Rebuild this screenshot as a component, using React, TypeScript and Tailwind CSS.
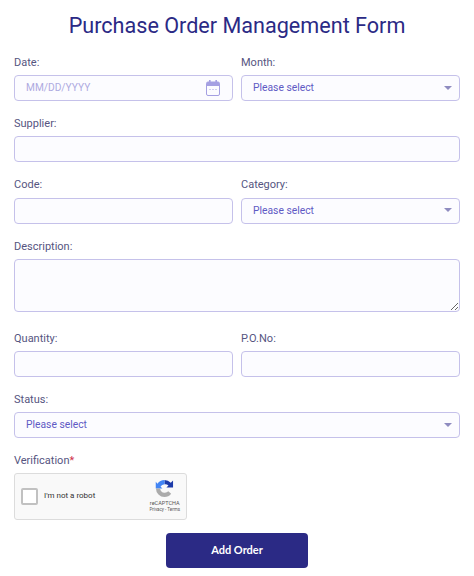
import React from "react";

const inputClass =
  "w-full h-[26px] rounded-[4px] border border-[#c5c1ea] bg-[#fcfcff] outline-none";

const Label = ({ children }: { children: React.ReactNode }) => (
  <label className="block h-[20px] pt-[0.5px] text-[11px] leading-[14px] text-[#56557f]">
    {children}
  </label>
);

const TextField = ({ label }: { label: string }) => (
  <div className="min-w-0">
    <Label>{label}</Label>
    <input className={inputClass} />
  </div>
);

const SelectField = ({ label }: { label: string }) => (
  <div className="min-w-0">
    <Label>{label}</Label>
    <div className={`${inputClass} flex items-center justify-between pb-[1px] pl-[11px] pr-[7px]`}>
      <span className="text-[10.3px] text-[#5f5ac4]">Please select</span>
      <svg width="8" height="4" viewBox="0 0 8 4">
        <path d="M0 0h8L4 4z" fill="#8f8cc0" />
      </svg>
    </div>
  </div>
);

const CalendarIcon = () => (
  <svg width="14" height="16" viewBox="0 0 14 16" fill="none">
    <rect x="0.5" y="2" width="13" height="13.5" rx="1.5" fill="#fcfcff" stroke="#a5a0e2" />
    <path d="M0.5 3.5a1.5 1.5 0 0 1 1.5-1.5h10a1.5 1.5 0 0 1 1.5 1.5V6h-13z" fill="#a5a0e2" />
    <rect x="3" y="0" width="1.6" height="3" fill="#a5a0e2" />
    <rect x="9.4" y="0" width="1.6" height="3" fill="#a5a0e2" />
    <path d="M3.5 9.5h1M6.5 9.5h1M9.5 9.5h1" stroke="#a5a0e2" />
  </svg>
);

const RecaptchaLogo = () => (
  <svg width="19" height="19" viewBox="0 0 20 20" fill="none">
    <path d="M10 1a9 9 0 0 1 6.6 2.9L19 1.5V9h-7l2.2-2.2A5 5 0 0 0 10 5.5z" fill="#1c3aa9" />
    <path d="M10 1a9 9 0 0 0-7.4 3.9L0.8 3v7h7L5.8 8A5 5 0 0 1 10 5.5z" fill="#4285f4" />
    <path d="M1 10a9 9 0 0 0 9 9 9 9 0 0 0 7-3.4l-3-2.6A5 5 0 0 1 10 14.5 5 5 0 0 1 5.4 10z" fill="#ababab" />
  </svg>
);

export default function App() {
  return (
    <div className="w-[474px] h-[576px] overflow-hidden bg-white px-[14px] font-['Roboto',sans-serif]">
      <h1 className="h-[55px] pt-[11px] text-center text-[21.6px] leading-[30px] text-[#2b2a85]">
        Purchase Order Management Form
      </h1>

      <div className="grid grid-cols-2 gap-x-[8px] gap-y-[15.4px]">
        <div className="min-w-0">
          <Label>Date:</Label>
          <div className={`${inputClass} flex items-center justify-between pb-[1px] pl-[11px] pr-[12px]`}>
            <span className="text-[10.2px] text-[#aeaadf]">MM/DD/YYYY</span>
            <CalendarIcon />
          </div>
        </div>
        <SelectField label="Month:" />

        <div className="col-span-2">
          <TextField label="Supplier:" />
        </div>

        <TextField label="Code:" />
        <SelectField label="Category:" />

        <div className="col-span-2 mb-[3.5px]">
          <Label>Description:</Label>
          <textarea className="block w-full h-[53px] rounded-[4px] border border-[#c5c1ea] bg-[#fcfcff] outline-none" />
        </div>

        <TextField label="Quantity:" />
        <TextField label="P.O.No:" />

        <div className="col-span-2">
          <SelectField label="Status:" />
        </div>
      </div>

      <div className="mt-[15.5px]">
        <Label>
          Verification<span className="text-[#d0314b]">*</span>
        </Label>
        <div className="-mt-[1px] flex h-[47px] w-[173px] items-center rounded-[3px] border border-[#dcdcdc] bg-[#f9f9f9] pl-[6px] pr-[6px]">
          <span className="h-[17px] w-[17px] rounded-[2px] border-2 border-[#c1c1c1] bg-white" />
          <span className="ml-[6px] flex-1 text-[8px] text-[#333333]">I'm not a robot</span>
          <div className="flex flex-col items-center">
            <RecaptchaLogo />
            <span className="mt-[2px] text-[5.5px] leading-[7px] text-[#555555]">reCAPTCHA</span>
            <span className="text-[4.5px] leading-[6px] text-[#555555]">Privacy - Terms</span>
          </div>
        </div>
      </div>

      <div className="mt-[13px] flex justify-center">
        <button className="h-[35px] w-[142px] rounded-[4px] bg-[#2b2a85] text-[11px] font-bold text-white font-['Lato',sans-serif]">
          Add Order
        </button>
      </div>
    </div>
  );
}
